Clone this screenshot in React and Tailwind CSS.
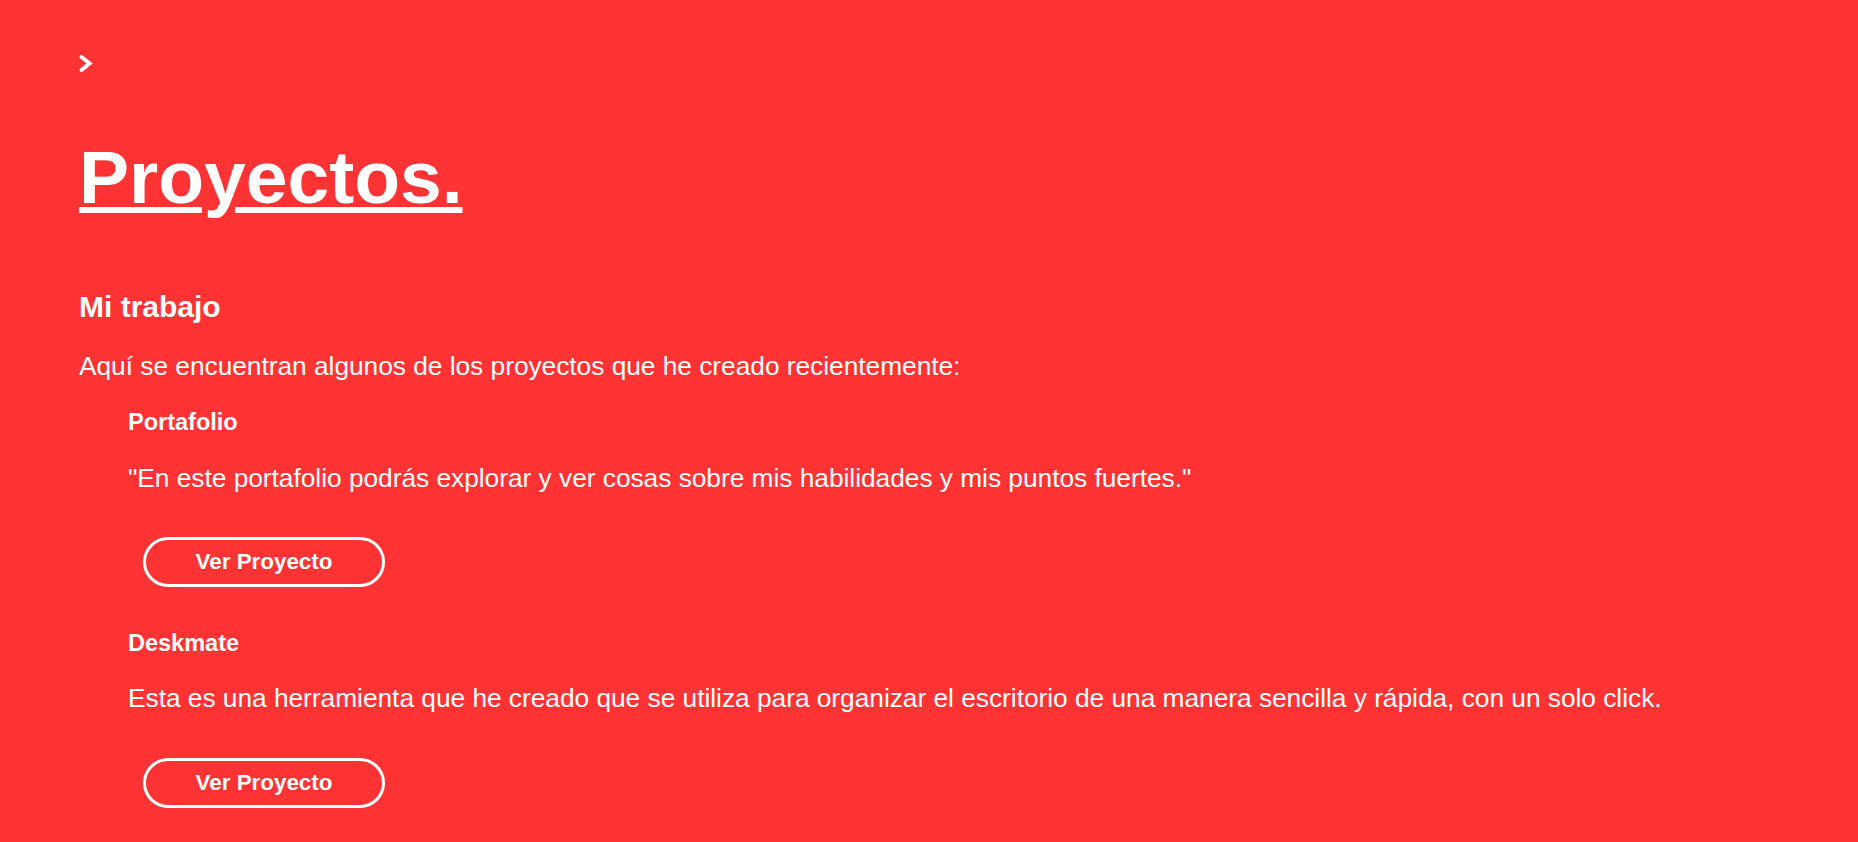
import React from "react";

function Chevron() {
  return (
    <svg width="15" height="19" viewBox="0 0 15 19" className="block -ml-[1px]">
      <polyline
        points="3.5,3 11.5,9.5 3.5,16"
        fill="none"
        stroke="white"
        strokeWidth="4"
        strokeLinecap="round"
        strokeLinejoin="miter"
      />
    </svg>
  );
}

function Project({ title, desc, first }) {
  return (
    <div className={first ? "mt-[32px]" : "mt-[45px]"}>
      <h4 className="text-[23.5px] leading-[23px] font-bold">{title}</h4>
      <p className={(first ? "mt-[31px]" : "mt-[30px]") + " text-[26.25px] leading-[26px]"}>{desc}</p>
      <button className={(first ? "mt-[46px]" : "mt-[47px]") + " ml-[15px] flex h-[50px] w-[242px] items-center justify-center rounded-full border-[3px] border-white text-[22.4px] leading-[22px] font-bold text-white"}>
        Ver Proyecto
      </button>
    </div>
  );
}

export default function App() {
  return (
    <div className="min-h-screen bg-[#ff3333] text-white font-['Liberation_Sans',Arial,sans-serif] pl-[79px] pt-[54px] pb-[30px]">
      <Chevron />
      <h1 className="mt-[67px] text-[75px] leading-[75px] font-bold underline decoration-[6px] underline-offset-[4px]">
        Proyectos.
      </h1>
      <h3 className="mt-[77px] text-[30px] leading-[29px] font-bold">Mi trabajo</h3>
      <p className="mt-[32px] text-[26.25px] leading-[26px]">
        Aquí se encuentran algunos de los proyectos que he creado recientemente:
      </p>
      <div className="pl-[49px]">
        <Project
          first
          title="Portafolio"
          desc={'"En este portafolio podrás explorar y ver cosas sobre mis habilidades y mis puntos fuertes."'}
        />
        <Project
          title="Deskmate"
          desc="Esta es una herramienta que he creado que se utiliza para organizar el escritorio de una manera sencilla y rápida, con un solo click."
        />
      </div>
    </div>
  );
}
